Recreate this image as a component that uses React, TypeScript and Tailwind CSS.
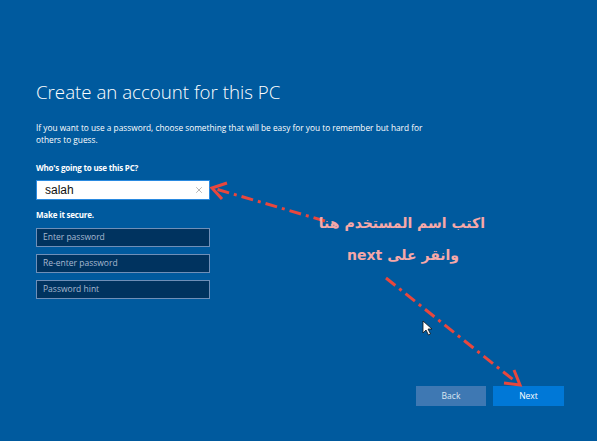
import { X } from "lucide-react";

const FIELDS = ["Enter password", "Re-enter password", "Password hint"];

function Annotations() {
  return (
    <svg className="absolute inset-0 pointer-events-none" width={597} height={441} viewBox="0 0 597 441">
      <g stroke="#e8473d" strokeWidth={3} fill="none">
        <line x1={325} y1={221} x2={216} y2={189} strokeDasharray="12 5 3 5" />
        <polyline points="227,183 212,188 222,199" strokeLinejoin="miter" />
        <line x1={386} y1={278} x2={516} y2={382} strokeDasharray="12 5 3 5" />
        <polyline points="504,383 520,385 514,370" strokeLinejoin="miter" />
      </g>
      <path d="M423 321 L423 333 L426 330 L428.5 335 L430.5 334 L428 329 L432 329 Z" fill="#fff" stroke="#111" strokeWidth={0.8} />
    </svg>
  );
}

export default function App() {
  return (
    <div className="relative w-[597px] h-[441px] overflow-hidden bg-[#005a9e] text-white font-['Open_Sans','Noto_Sans',sans-serif] flex flex-col">
      <div className="pl-[36px] pt-[77px]">
        <h1 className="text-[18.7px] font-light leading-[30px]">Create an account for this PC</h1>
        <p className="mt-[15px] w-[395px] text-[8.3px] leading-[12px]">
          If you want to use a password, choose something that will be easy for you to remember but hard for others to guess.
        </p>
        <p className="mt-[16px] text-[8px] leading-[12px] font-bold tracking-[-0.2px]">Who's going to use this PC?</p>
        <div className="mt-[6px] w-[174px] h-[20px] bg-white border border-[#2a8ae0] flex items-center justify-between pl-[8px] pr-[5px]">
          <span className="text-[12px] leading-none text-[#111] font-['Liberation_Sans',sans-serif]">salah</span>
          <X size={10} strokeWidth={1.5} className="text-[#8a8a8a]" />
        </div>
        <p className="mt-[9px] text-[8px] leading-[12px] font-bold tracking-[-0.2px]">Make it secure.</p>
        <div className="mt-[7px] flex flex-col gap-[7px]">
          {FIELDS.map((f) => (
            <div key={f} className="w-[174px] h-[19px] bg-[#00335f] border border-[#6f8fb8] flex items-center pl-[6px]">
              <span className="text-[8.5px] leading-none text-[#a7b9d1]">{f}</span>
            </div>
          ))}
        </div>
      </div>

      <div className="mt-auto flex justify-end gap-[7px] pr-[33px] pb-[35px]">
        <button className="w-[70px] h-[20px] bg-[#3e78b3] text-[8.5px] text-[#dde7f2]">Back</button>
        <button className="w-[71px] h-[20px] bg-[#0078d7] text-[8.5px] text-white">Next</button>
      </div>

      <Annotations />

      <div dir="rtl" className="absolute right-[112px] top-[211px] whitespace-nowrap font-['DejaVu_Sans',sans-serif] font-bold text-[14px] leading-[24px] text-[#f6a8a8]">
        اكتب اسم المستخدم هنا
      </div>
      <div dir="rtl" className="absolute right-[138px] top-[243px] whitespace-nowrap font-['DejaVu_Sans',sans-serif] font-bold text-[14px] leading-[24px] text-[#f6a8a8]">
        وانقر على next
      </div>
    </div>
  );
}
